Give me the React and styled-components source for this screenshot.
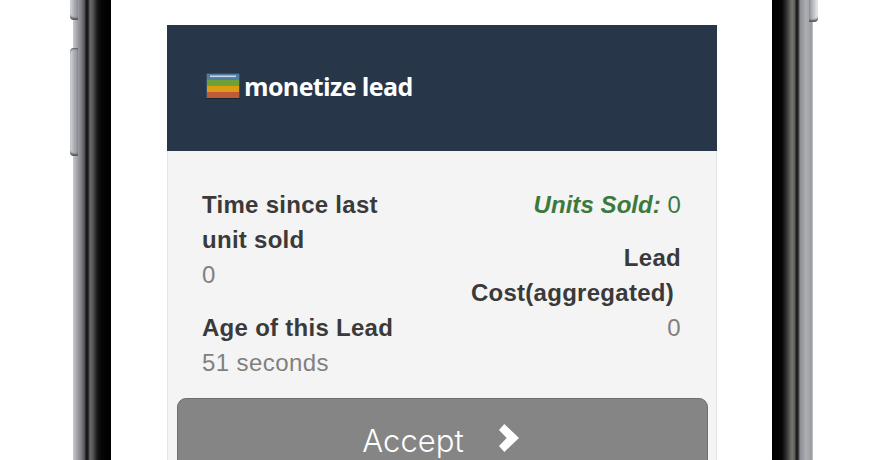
import React from "react";
import styled, { createGlobalStyle } from "styled-components";

const GlobalStyle = createGlobalStyle`
  html, body {
    margin: 0;
    padding: 0;
    background: #ffffff;
    overflow: hidden;
  }
  body {
    font-family: "Liberation Sans", Arial, sans-serif;
  }
`;

const Page = styled.div`
  display: flex;
  width: 880px;
  height: 460px;
  overflow: hidden;
  padding-left: 73px;
  box-sizing: border-box;
`;

const Bezel = styled.div`
  position: relative;
  flex: none;
  width: ${(p) => p.$width}px;
  background: ${(p) => p.$background};
`;

const SideButton = styled.div`
  position: absolute;
  ${(p) => (p.$side === "left" ? "left: -3px;" : "right: -5px;")}
  top: ${(p) => p.$top}px;
  height: ${(p) => p.$height}px;
  width: ${(p) => (p.$side === "left" ? 8 : 9)}px;
  background: ${(p) =>
    p.$side === "left"
      ? "linear-gradient(90deg, #d9dadd, #a9abb1 55%, #8f9198)"
      : "linear-gradient(90deg, #8f9198, #c4c5c9 55%, #eeeef0)"};
  border-radius: ${(p) =>
    p.$side === "left" ? "4px 0 0 4px" : "0 4px 4px 0"};
  box-shadow: ${(p) =>
    [
      p.$start ? "inset 0 2px 2px -1px #55565c" : "",
      p.$end ? "inset 0 -3px 2px -1px #55565c" : "",
    ]
      .filter(Boolean)
      .join(", ") || "none"};
`;

const Screen = styled.div`
  flex: none;
  width: 661px;
  padding: 25px 55px 0 56px;
  box-sizing: border-box;
  background: #ffffff;
`;

const Card = styled.div`
  width: 550px;
  height: 435px;
  overflow: hidden;
  background: #f4f4f4;
`;

const Header = styled.div`
  display: flex;
  align-items: center;
  gap: 4px;
  height: 126px;
  padding: 0 0 4px 39px;
  box-sizing: border-box;
  background: #283649;
`;

const LogoText = styled.span`
  font-family: "Open Sans", sans-serif;
  font-weight: 700;
  font-size: 25px;
  letter-spacing: -0.6px;
  color: #ffffff;
`;

const Body = styled.div`
  height: 309px;
  box-sizing: border-box;
  padding: 36px 9px 0;
  border-left: 1px solid #e3e3e3;
  border-right: 1px solid #e3e3e3;
`;

const Columns = styled.div`
  display: flex;
  justify-content: space-between;
  padding: 0 26px 0 25px;
`;

const Column = styled.div`
  text-align: ${(p) => (p.$right ? "right" : "left")};
`;

const Group = styled.div`
  margin-bottom: 18px;
`;

const Label = styled.div`
  font-size: 24px;
  line-height: 35px;
  font-weight: 700;
  letter-spacing: 0.28px;
  color: #3a3a3a;
`;

const Value = styled.div`
  font-size: 24px;
  line-height: 35px;
  letter-spacing: 0.42px;
  color: #808080;
`;

const Sold = styled.div`
  font-size: 24px;
  line-height: 35px;
  letter-spacing: 0.06px;
  color: #3c7a3c;

  b {
    font-style: italic;
  }
`;

const AcceptButton = styled.button`
  display: flex;
  align-items: center;
  justify-content: center;
  gap: 35px;
  width: 531px;
  height: 80px;
  padding: 4px 4px 0 0;
  box-sizing: border-box;
  border: 1px solid #6e6e6e;
  border-radius: 9px;
  background: #858585;
  color: #ffffff;
  font-family: Inter, "Liberation Sans", sans-serif;
  font-size: 31px;
  font-weight: 300;
`;

const ChevronIcon = styled.svg`
  flex: none;
  margin-bottom: 5px;
`;

const FlagLogo = () => (
  <svg width="34" height="26" viewBox="0 0 34 26">
    <rect x="0.5" y="0.5" width="33" height="25" fill="#3d6a92" />
    <rect x="1" y="1" width="32" height="6" fill="#4f7da3" />
    <rect x="4" y="2.5" width="26" height="1.6" fill="#c9d8e0" />
    <rect x="1" y="7" width="32" height="6" fill="#6fa035" />
    <rect x="1" y="13" width="32" height="6" fill="#dd9c12" />
    <rect x="1" y="19" width="32" height="6" fill="#c05a3a" />
    <rect x="0" y="25" width="34" height="1" fill="#1d2531" />
  </svg>
);

const Chevron = () => (
  <ChevronIcon width="20" height="28" viewBox="0 0 20 28">
    <polygon
      points="5.3,0 20,14 5.3,28 0,22 7.7,14 0,6"
      fill="#ffffff"
    />
  </ChevronIcon>
);

const leftRail =
  "linear-gradient(90deg, #c9cace 0, #a3a5ab 4px, #77787d 9px, #4a4b4f 12px, #151515 13px, #1c1c1c 15px, #6a6a6a 17px, #555 20px, #1a1a1a 24px, #050505 28px, #000 38px)";
const rightRail =
  "linear-gradient(90deg, #000 0, #060606 10px, #2c2c2c 14px, #77776f 20px, #5c5c58 23px, #1d1d1d 24px, #222 26px, #8c8d92 28px, #aeafb5 34px, #9a9ba1 40px, #dfe0e3 41px)";

export default function App() {
  return (
    <>
      <GlobalStyle />
      <Page>
        <Bezel $width={38} $background={leftRail}>
          <SideButton $side="left" $top={-20} $height={40} $end />
          <SideButton $side="left" $top={48} $height={108} $start $end />
        </Bezel>
        <Screen>
          <Card>
            <Header>
              <FlagLogo />
              <LogoText>monetize lead</LogoText>
            </Header>
            <Body>
              <Columns>
                <Column>
                  <Group>
                    <Label>
                      Time since last
                      <br />
                      unit sold
                    </Label>
                    <Value>0</Value>
                  </Group>
                  <Group>
                    <Label>Age of this Lead</Label>
                    <Value>51 seconds</Value>
                  </Group>
                </Column>
                <Column $right>
                  <Group>
                    <Sold>
                      <b>Units Sold:</b> 0
                    </Sold>
                  </Group>
                  <Group>
                    <Label>
                      Lead
                      <br />
                      Cost(aggregated)&nbsp;
                    </Label>
                    <Value>0</Value>
                  </Group>
                </Column>
              </Columns>
              <AcceptButton>
                Accept
                <Chevron />
              </AcceptButton>
            </Body>
          </Card>
        </Screen>
        <Bezel $width={41} $background={rightRail}>
          <SideButton $side="right" $top={-20} $height={42} $end />
        </Bezel>
      </Page>
    </>
  );
}
